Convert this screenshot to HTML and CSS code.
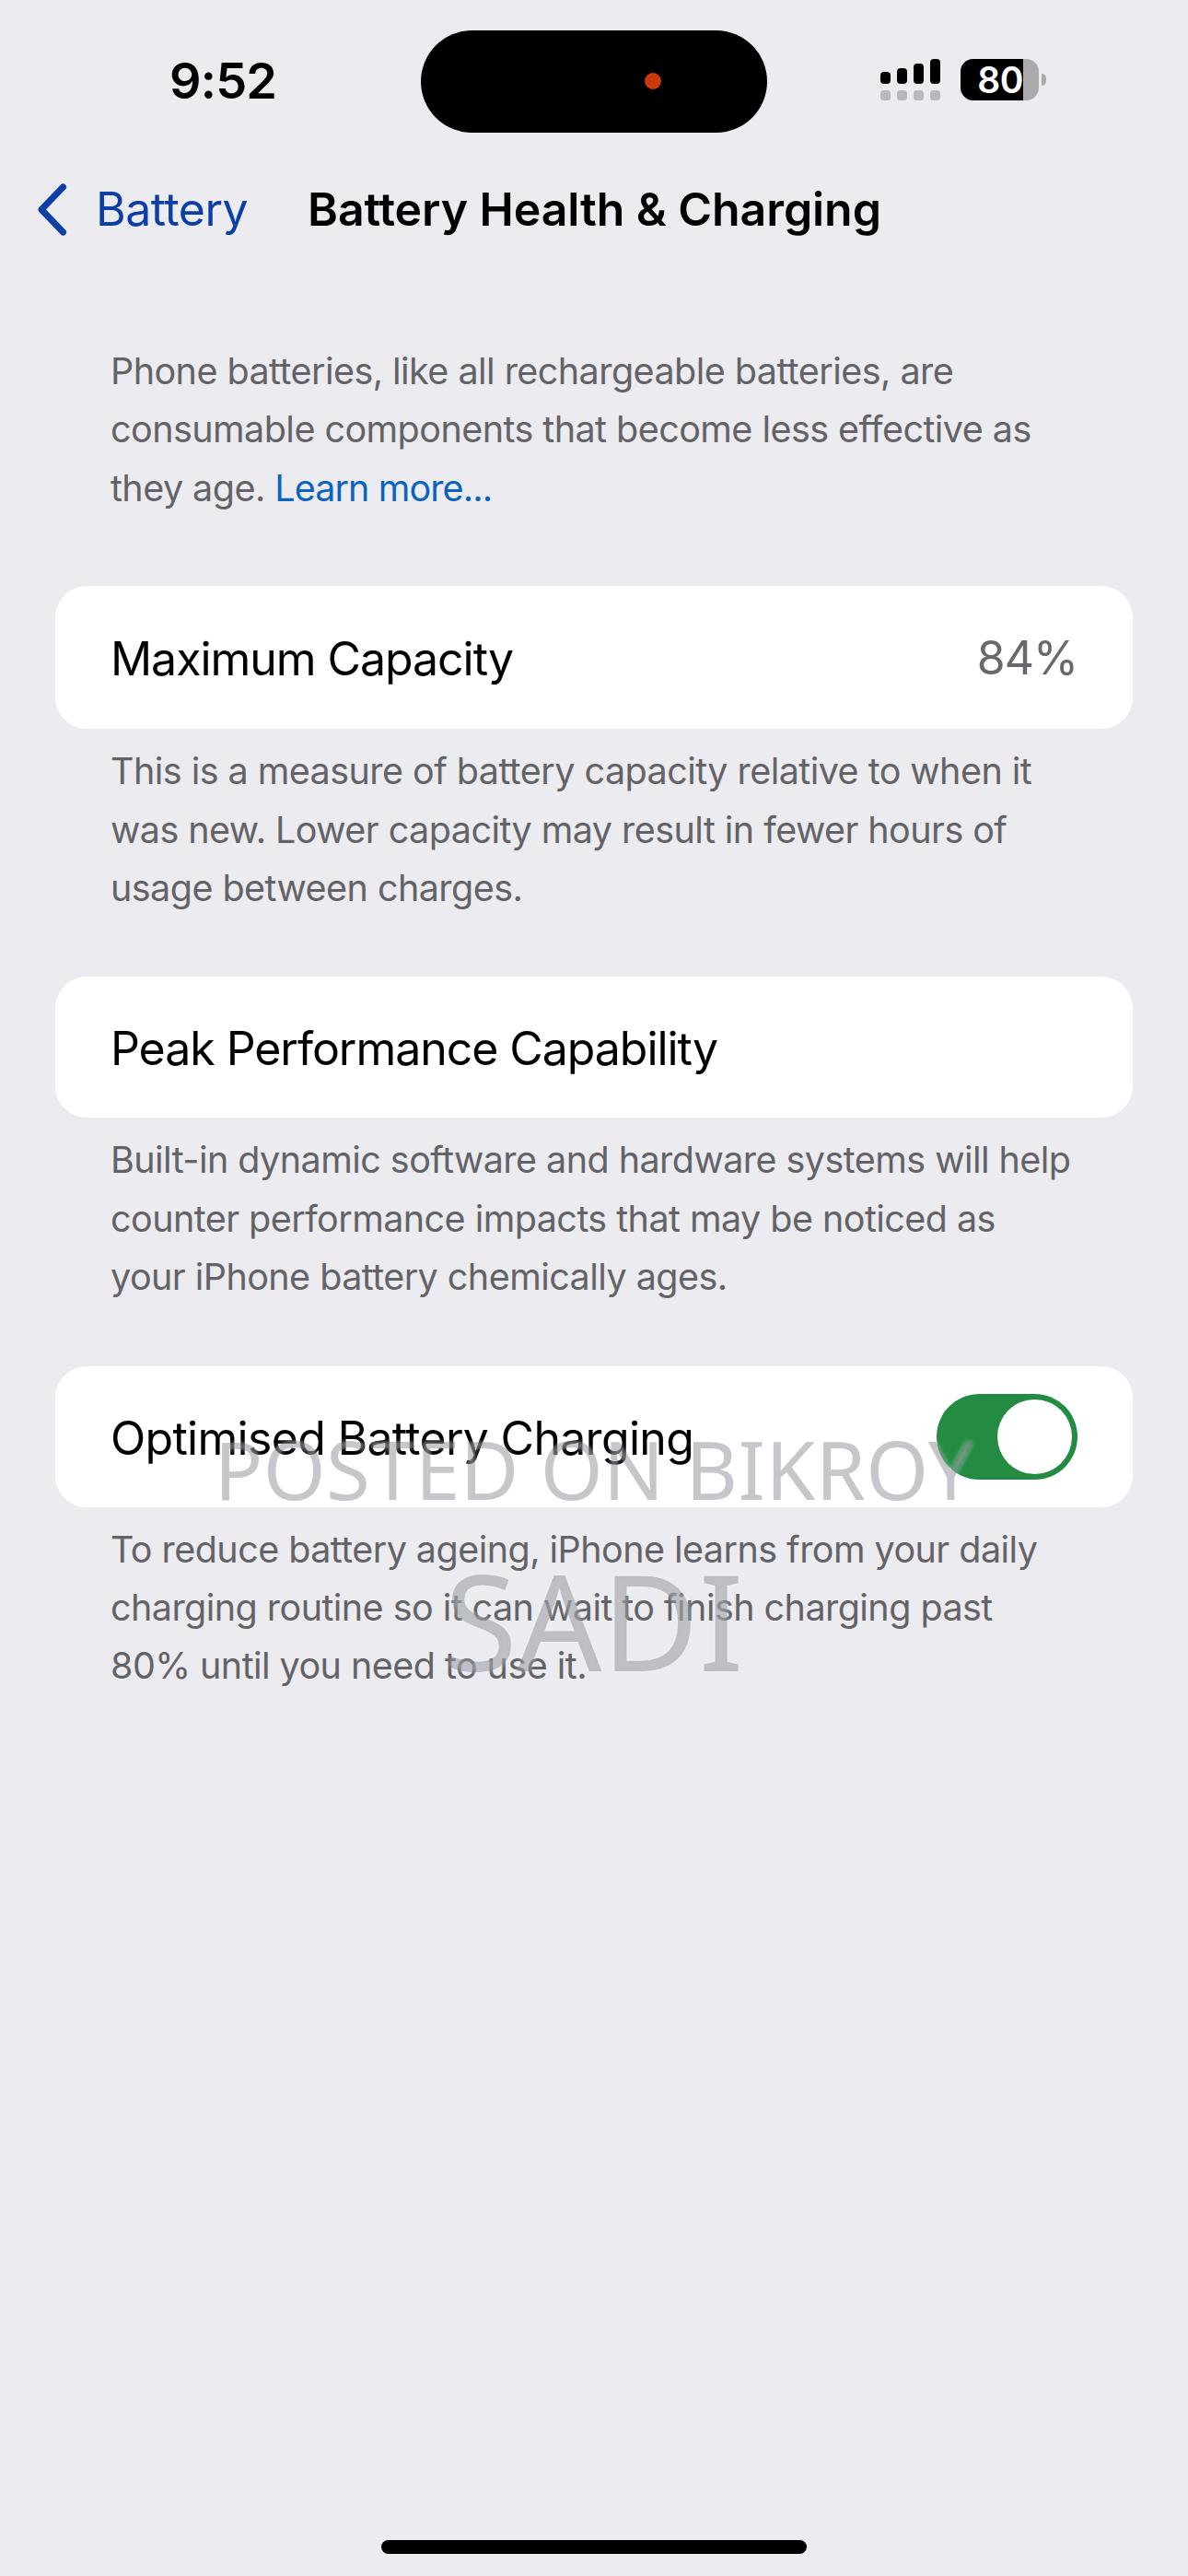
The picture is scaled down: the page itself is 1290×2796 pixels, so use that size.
FILE: index.html
```html
<!DOCTYPE html>
<html lang="en">
<head>
<meta charset="utf-8">
<title>Battery Health &amp; Charging</title>
<link rel="stylesheet" href="styles.css">
</head>
<body>
<div class="screen">
  <header class="status">
    <div class="time">9:52</div>
    <div class="island"><span class="island-dot"></span></div>
    <div class="indicators">
      <svg class="signal" width="65" height="45" viewBox="0 0 65 45" aria-hidden="true">
        <rect x="0" y="14" width="11" height="13" rx="4" fill="#000"/>
        <rect x="18" y="10" width="11" height="17" rx="4" fill="#000"/>
        <rect x="36" y="5" width="11" height="22" rx="4" fill="#000"/>
        <rect x="54" y="0" width="11" height="27" rx="4" fill="#000"/>
        <rect x="0" y="34" width="11" height="11" rx="3.5" fill="#b9b9bd"/>
        <rect x="18" y="34" width="11" height="11" rx="3.5" fill="#b9b9bd"/>
        <rect x="36" y="34" width="11" height="11" rx="3.5" fill="#b9b9bd"/>
        <rect x="54" y="34" width="11" height="11" rx="3.5" fill="#b9b9bd"/>
      </svg>
      <div class="battery">
        <div class="battery-body"><div class="battery-fill"><span class="battery-num">80</span></div></div>
        <span class="battery-nub"></span>
      </div>
    </div>
  </header>

  <nav class="nav">
    <svg class="chevron" width="33" height="57" viewBox="0 0 33 57" aria-hidden="true">
      <path d="M28.5 4 L5 28.5 L28.5 53" fill="none" stroke="#0b3fa6" stroke-width="7" stroke-linecap="round" stroke-linejoin="round"/>
    </svg>
    <span class="back">Battery</span>
    <h1 class="title">Battery Health &amp; Charging</h1>
  </nav>

  <main class="content">
    <p class="note note-intro">Phone batteries, like all rechargeable batteries, are<br>consumable components that become less effective as<br>they age. <a class="link">Learn more...</a></p>

    <section class="card">
      <span class="card-label">Maximum Capacity</span>
      <span class="card-value">84%</span>
    </section>
    <p class="note">This is a measure of battery capacity relative to when it<br>was new. Lower capacity may result in fewer hours of<br>usage between charges.</p>

    <section class="card card-compact">
      <span class="card-label">Peak Performance Capability</span>
    </section>
    <p class="note">Built-in dynamic software and hardware systems will help<br>counter performance impacts that may be noticed as<br>your iPhone battery chemically ages.</p>

    <section class="card card-compact">
      <span class="card-label card-label-loose">Optimised Battery Charging</span>
      <span class="toggle"><span class="knob"></span></span>
    </section>
    <p class="note">To reduce battery ageing, iPhone learns from your daily<br>charging routine so it can wait to finish charging past<br>80% until you need to use it.</p>
  </main>

  <div class="watermark watermark-top">POSTED ON BIKROY</div>
  <div class="watermark watermark-name">SADI</div>
  <div class="home-bar"></div>
</div>
</body>
</html>
```

FILE: styles.css
```css
* { box-sizing: border-box; }
html, body { margin: 0; padding: 0; }
body { background: #ebebf0; font-family: Inter, "Liberation Sans", sans-serif; }

.screen {
  position: relative;
  width: 1290px;
  height: 2796px;
  overflow: hidden;
  background: #ebebf0;
}

/* status bar */
.status {
  display: flex;
  align-items: flex-start;
  height: 144px;
  padding-top: 33px;
}
.time {
  width: 457px;
  padding: 22px 0 0 184px;
  font-size: 54px;
  line-height: 66px;
  font-weight: 600;
  letter-spacing: -0.8px;
  color: #000;
}
.island {
  position: relative;
  width: 376px;
  height: 111px;
  border-radius: 56px;
  background: #000;
}
.island-dot {
  position: absolute;
  left: 243px;
  top: 46px;
  width: 18px;
  height: 18px;
  border-radius: 50%;
  background: #c93a0c;
}
.indicators {
  display: flex;
  align-items: flex-start;
  gap: 22px;
  padding: 31px 0 0 123px;
}
.signal { display: block; }
.battery {
  display: flex;
  align-items: center;
  gap: 3px;
}
.battery-body {
  width: 85px;
  height: 45px;
  border-radius: 14px;
  background: #aaaaad;
  overflow: hidden;
}
.battery-fill {
  display: flex;
  align-items: center;
  justify-content: flex-end;
  width: 68px;
  height: 45px;
  background: #000;
}
.battery-num {
  font-size: 39px;
  line-height: 45px;
  font-weight: 600;
  color: #fff;
  letter-spacing: -0.5px;
}
.battery-nub {
  width: 5px;
  height: 13px;
  border-radius: 0 6px 6px 0;
  background: #aaaaad;
}

/* navigation */
.nav {
  display: flex;
  align-items: center;
  height: 166px;
  padding-left: 40px;
}
.chevron { display: block; flex: none; }
.back {
  margin-left: 31px;
  width: 230px;
  font-size: 50px;
  line-height: 60px;
  letter-spacing: -0.5px;
  color: #0b3fa6;
}
.title {
  margin: 0;
  font-size: 50px;
  line-height: 60px;
  font-weight: 600;
  letter-spacing: -0.08px;
  color: #000;
}

/* content */
.content {
  padding: 0 60px;
  margin-top: 62px;
}
.note {
  margin: 15px 0 64px;
  padding: 0 60px;
  font-size: 39.5px;
  line-height: 63.4px;
  letter-spacing: -0.55px;
  color: #636367;
  white-space: nowrap;
}
.note-intro { margin: 0 0 74px; }
.link { color: #0a63bd; letter-spacing: -0.9px; }

.card {
  display: flex;
  align-items: center;
  justify-content: space-between;
  height: 155px;
  padding: 0 60px;
  border-radius: 34px;
  background: #fff;
}
.card-compact { height: 153px; }
.card-label {
  padding-top: 3px;
  font-size: 50px;
  line-height: 60px;
  letter-spacing: -1.05px;
  color: #000;
}
.card-label-loose { letter-spacing: -0.7px; }
.card-value {
  padding-top: 1px;
  font-size: 50px;
  line-height: 60px;
  letter-spacing: -1.05px;
  color: #69696d;
}
.toggle {
  display: flex;
  justify-content: flex-end;
  align-items: center;
  width: 153px;
  height: 93px;
  padding-right: 6px;
  border-radius: 47px;
  background: #238b42;
}
.knob {
  width: 81px;
  height: 81px;
  border-radius: 50%;
  background: #fff;
}

/* watermark laid over the page */
.watermark {
  position: absolute;
  left: 0;
  width: 100%;
  text-align: center;
  font-family: "Noto Sans", sans-serif;
  font-weight: 400;
  color: rgba(95, 100, 110, 0.36);
  text-shadow: 0 0 5px rgba(255, 255, 255, 0.45);
  white-space: nowrap;
}
.watermark-top {
  top: 1534px;
  font-size: 87px;
  line-height: 120px;
  letter-spacing: 0.4px;
}
.watermark-name {
  top: 1668px;
  font-size: 144px;
  line-height: 180px;
}

.home-bar {
  position: absolute;
  left: 414px;
  top: 2757px;
  width: 462px;
  height: 15px;
  border-radius: 8px;
  background: #000;
}
```
